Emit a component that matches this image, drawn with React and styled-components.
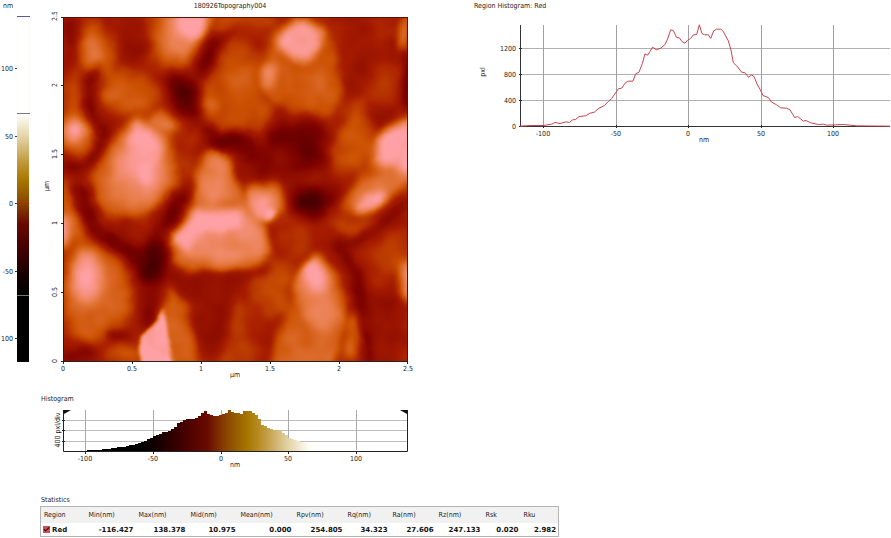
import React, { useState } from "react";
import styled, { createGlobalStyle } from "styled-components";
import { Check } from "lucide-react";

const GlobalStyle = createGlobalStyle`
  body {
    margin: 0;
    background: #ffffff;
    color: #222222;
    font-family: "DejaVu Sans Condensed", "DejaVu Sans", sans-serif;
    font-size: 7px;
    line-height: 12px;
  }
`;

const Page = styled.main`
  display: grid;
  grid-template-columns: minmax(0, 416fr) minmax(0, 425fr);
  column-gap: 50px;
`;

const ScanPanel = styled.section`
  display: grid;
  grid-template-columns: minmax(0, 38fr) minmax(0, 378fr);
`;

const HistogramPanel = styled.section`
  grid-column: 2;
  margin-top: 13px;
`;

const RegionPanel = styled.section`
  min-width: 0;
`;

const StatisticsPanel = styled.section`
  grid-column: 1 / -1;
  margin: 24px 0 0 40px;
`;

const Heading = styled.h2`
  margin: 0;
  padding-left: ${(props) => props.$indent || 0}px;
  font-size: 7px;
  font-weight: 400;
  line-height: 12px;
  text-align: ${(props) => props.$align || "left"};
`;

const Plot = styled.svg`
  display: block;
  width: 100%;
  height: auto;
  overflow: hidden;
`;

const Label = styled.text`
  font-size: 7px;
  fill: #222222;
  text-anchor: ${(props) => props.$anchor || "middle"};
`;

const Table = styled.table`
  width: 61%;
  table-layout: fixed;
  border-collapse: collapse;
  border: 1px solid #b4b4b4;
`;

const HeadCell = styled.th`
  height: 16px;
  padding: 0 3px;
  background: #f1f1f1;
  font-weight: 400;
  text-align: left;
  white-space: nowrap;
`;

const Cell = styled.td`
  height: 13px;
  padding: 0 2px;
  font-weight: 700;
  font-family: "DejaVu Sans", sans-serif;
  color: #111111;
  text-align: right;
  white-space: nowrap;

  &:first-child {
    text-align: left;
  }
`;

const RegionLabel = styled.label`
  display: flex;
  align-items: center;
  gap: 2px;
`;

const TickBox = styled.span`
  position: relative;
  display: flex;
  width: 7px;
  height: 7px;

  svg {
    position: absolute;
    inset: 0;
    pointer-events: none;
  }
`;

const Checkbox = styled.input`
  appearance: none;
  width: 7px;
  height: 7px;
  margin: 0;
  border: 1px solid #b85860;
  background: #dc4c58;
`;

// x runs along the plot, y is the height above the base line (3 units per pixel)
const counts = [
  [0, 1], [30, 3], [70, 3], [95, 7], [105, 12], [120, 9], [138, 14],
  [148, 12], [158, 20], [167, 21], [177, 30], [197, 32], [210, 40],
  [223, 43], [237, 55], [252, 62], [265, 75], [275, 84], [295, 113],
  [305, 115], [317, 132], [325, 136], [339, 136], [347, 158], [357, 163],
  [367, 189], [375, 218], [383, 214], [398, 238], [409, 230], [422, 235],
  [435, 246], [443, 263], [452, 290], [460, 288], [470, 267], [478, 266],
  [486, 255], [495, 250], [503, 259], [512, 264], [520, 275], [530, 276],
  [538, 305], [546, 279], [554, 275], [565, 275], [572, 264], [581, 287],
  [590, 292], [602, 292], [608, 288], [625, 257], [633, 229], [640, 191],
  [650, 182], [665, 163], [675, 161], [686, 147], [694, 155], [702, 150],
  [712, 125], [720, 112], [729, 93], [745, 87], [755, 73], [770, 65],
  [782, 56], [800, 55], [810, 50], [824, 27], [833, 30], [850, 16],
  [858, 18], [872, 11], [895, 6], [910, 7], [920, 4], [970, 6], [1010, 2],
  [1110, 1],
];

const countAt = (x) => {
  const i = counts.findIndex((point) => point[0] >= x);
  if (i <= 0) return counts[0][1];
  const [x0, y0] = counts[i - 1];
  const [x1, y1] = counts[i];
  return y0 + ((y1 - y0) * (x - x0)) / (x1 - x0);
};

const bars = Array.from({ length: 115 }, (_, i) => ({
  x: i * 3,
  height: Math.round(countAt((i + 0.5) * 9.65) * 0.137),
}));

// Surface features: height 0-1, blur, shape
const ridge = (h, blur, d) => ({ h, blur, d });
const grain = (h, blur, cx, cy, rx, ry, rotate = 0) => ({
  h, blur, cx, cy, rx, ry, rotate,
});

const features = [
  grain(0.22, 8, 72, 40, 10, 30),
  grain(0.26, 8, 132, 38, 14, 26),
  grain(0.34, 8, 375, 70, 32, 45),
  grain(0.3, 8, 215, 318, 26, 44),
  grain(0.3, 8, 200, 290, 30, 14),
  grain(0.14, 8, 300, 145, 34, 28),
  grain(0.24, 8, 265, 165, 34, 18),
  grain(0.08, 7, 225, 142, 34, 12, 10),
  grain(0.32, 8, 385, 325, 24, 36),
  grain(0.54, 7, 78, 92, 14, 24),
  grain(0.62, 6, 98, 54, 17, 33, -12),
  grain(0.82, 6, 94, 52, 8, 18, -10),
  grain(0.58, 7, 133, 93, 32, 22, 12),
  grain(0.66, 5, 112, 92, 9, 8),
  ridge(0.6, 6, "M145 10 L226 10 L206 36 L198 62 L182 74 L164 64 L150 40Z"),
  ridge(0.82, 6, "M161 14 L210 14 L196 40 L182 66 L166 50Z"),
  ridge(1.3, 4, "M172 8 L218 8 L203 32 L190 42 L178 35Z"),
  ridge(0.52, 5, "M215 8 L275 8 L264 28 L232 26 L212 36Z"),
  grain(0.62, 7, 79, 134, 20, 29, -20),
  grain(1.15, 6, 73, 132, 10, 12),
  ridge(0.56, 5, "M222 42 L248 38 L260 60 L262 90 L272 112 L260 129 L226 130 L202 120 L197 98 L207 74Z"),
  grain(0.78, 5, 211, 106, 9, 8),
  grain(0.64, 6, 240, 82, 14, 16),
  ridge(0.6, 4, "M273 30 L298 18 L326 28 L337 55 L342 88 L331 115 L300 113 L272 105 L258 86 L265 56Z"),
  ridge(1.25, 5, "M274 44 L287 28 L306 20 L323 34 L320 50 L304 64 L288 54Z"),
  grain(0.84, 5, 269, 77, 7, 10, 15),
  grain(0.66, 6, 305, 86, 20, 14),
  grain(0.58, 7, 354, 138, 22, 36, 12),
  grain(0.46, 7, 384, 84, 18, 24),
  grain(0.06, 5, 409, 80, 5, 44),
  grain(0.8, 5, 405, 34, 5, 18),
  ridge(0.7, 5, "M414 110 L388 120 L372 142 L372 170 L392 182 L414 180Z"),
  ridge(1.3, 4, "M414 115 L396 122 L378 140 L379 164 L394 172 L414 172Z"),
  ridge(0.66, 5, "M136 116 L160 126 L176 150 L175 186 L158 210 L136 221 L110 215 L91 200 L95 168 L112 136Z"),
  ridge(0.86, 7, "M134 122 L160 136 L170 160 L160 196 L130 208 L108 194 L114 154Z"),
  ridge(1.3, 5, "M136 116 L148 134 L163 150 L160 168 L144 184 L130 174 L128 140Z"),
  grain(0.78, 5, 163, 123, 14, 10),
  grain(0.46, 7, 190, 148, 12, 20, 25),
  grain(0, 8, 184, 96, 13, 28, -22),
  grain(0.12, 7, 207, 58, 8, 24, 24),
  ridge(0.7, 4, "M205 152 L218 152 L231 164 L240 188 L248 212 L266 226 L271 248 L260 268 L232 273 L190 271 L171 262 L169 244 L178 220 L192 198 L198 172Z"),
  grain(0.84, 6, 215, 182, 13, 28),
  ridge(0.86, 5, "M188 210 L242 210 L266 230 L268 254 L232 264 L190 256 L174 240Z"),
  ridge(1.2, 4, "M192 209 L236 212 L245 224 L226 231 L202 235 L186 247 L175 238Z"),
  grain(0.76, 5, 264, 203, 20, 20),
  grain(0.92, 5, 261, 204, 12, 12),
  grain(1.3, 3, 271, 214, 6, 6),
  grain(0.78, 6, 374, 190, 32, 16, -30),
  grain(1.15, 4, 371, 201, 17, 6, -28),
  grain(0.58, 6, 356, 228, 22, 9, -10),
  grain(-0.1, 7, 314, 201, 22, 17),
  grain(0.44, 7, 290, 238, 17, 15),
  grain(0.54, 8, 394, 254, 22, 16, -15),
  grain(0.72, 6, 74, 212, 10, 32, -12),
  grain(1.1, 5, 63, 232, 8, 18),
  ridge(0.66, 7, "M68 240 L97 242 L120 260 L132 285 L130 315 L108 332 L84 340 L64 310Z"),
  grain(1.25, 7, 87, 277, 14, 26, -12),
  grain(0.62, 7, 97, 330, 16, 10),
  grain(0, 7, 153, 260, 15, 28, 8),
  grain(0.12, 6, 172, 212, 7, 32, 28),
  grain(0.2, 7, 150, 304, 12, 22),
  grain(0.2, 5, 116, 334, 10, 6),
  grain(0.16, 7, 76, 356, 22, 7),
  grain(0.58, 6, 125, 356, 16, 10),
  ridge(0.64, 5, "M170 286 L188 304 L194 340 L200 368 L160 368 L160 316Z"),
  ridge(1.3, 2, "M164 306 L168 334 L175 368 L141 368 L140 338 L154 324Z"),
  ridge(0.48, 5, "M238 290 L258 368 L220 368Z"),
  ridge(0.56, 6, "M274 256 L290 270 L294 310 L272 316 L248 304 L252 282Z"),
  ridge(0.67, 4, "M318 253 L330 264 L344 294 L346 322 L336 362 L306 366 L292 322 L296 274Z"),
  ridge(0.84, 6, "M314 258 L328 276 L340 316 L334 334 L304 318 L300 280Z"),
  ridge(1.25, 5, "M316 256 L325 276 L323 294 L310 290 L307 266Z"),
  ridge(0.66, 4, "M293 304 L306 330 L314 368 L270 368 L280 328Z"),
  grain(0.66, 4, 354, 334, 9, 24, 10),
  grain(0.95, 5, 408, 282, 6, 22),
];

const valleys = [
  { d: "M93 74 C85 92 90 118 104 136", h: 0.1, width: 11 },
  { d: "M104 138 C96 160 90 168 66 168", h: 0.14, width: 8 },
  { d: "M76 186 C84 206 90 230 106 236 S128 250 142 262", h: 0.08, width: 13 },
  { d: "M340 242 C352 270 366 300 368 362", h: 0.15, width: 11 },
  { d: "M412 200 C390 214 380 236 346 244", h: 0.12, width: 8 },
  { d: "M172 274 C200 284 240 282 268 270", h: 0.24, width: 7 },
  { d: "M340 118 C336 126 330 132 326 150", h: 0.22, width: 7 },
  { d: "M366 112 C384 126 396 122 410 112", h: 0.14, width: 5 },
];

const gray = (h) => {
  const v = Math.round(Math.max(0, Math.min(1, h)) * 255);
  return `rgb(${v}, ${v}, ${v})`;
};

const paletteStops = [
  [0, "#fffffa"],
  [0.12, "#e4d6ac"],
  [0.28, "#bd9230"],
  [0.36, "#a87800"],
  [0.48, "#8c4a00"],
  [0.6, "#6a0a00"],
  [0.74, "#440000"],
  [0.9, "#120000"],
  [1, "#000000"],
];

const ColorScale = () => (
  <Plot viewBox="0 12 38 368" role="img" aria-label="Height scale">
    <defs>
      <linearGradient id="scale" x1="0" y1="0" x2="0" y2="1">
        {paletteStops.map(([offset, color]) => (
          <stop key={offset} offset={offset} stopColor={color} />
        ))}
      </linearGradient>
    </defs>
    <rect x="17" y="17" width="12" height="96" fill="#fffffc" stroke="#f6f6f2" strokeWidth="0.5" />
    <rect x="17" y="114" width="12" height="182" fill="url(#scale)" />
    <rect x="17" y="295" width="12" height="67" fill="#000000" />
    <rect x="17" y="16" width="13" height="1" fill="#5558b0" />
    <rect x="17" y="113" width="13" height="1" fill="#77777f" />
    <rect x="17" y="203" width="12" height="1" fill="#b03000" />
    <rect x="17" y="295" width="12" height="1" fill="#777777" />
    {[["100", 69], ["50", 137], ["0", 204], ["-50", 272], ["100", 339]].map(
      ([text, y]) => (
        <g key={y}>
          <rect x="15" y={y - 1} width="2" height="1" fill="#333333" />
          <Label x="13" y={y + 2} $anchor="end">{text}</Label>
        </g>
      )
    )}
  </Plot>
);

const Surface = () => (
  <svg x="0" y="0" width="345" height="345" viewBox="63 17 345 345">
    <defs>
      {[2, 3, 4, 5, 6, 7, 8].map((size) => (
        <filter key={size} id={`soft${size}`} x="-150%" y="-150%" width="400%" height="400%">
          <feGaussianBlur stdDeviation={size * 0.9} />
        </filter>
      ))}
      <filter
        id="relief"
        filterUnits="userSpaceOnUse"
        x="43"
        y="-3"
        width="385"
        height="385"
        colorInterpolationFilters="sRGB"
      >
        <feTurbulence type="fractalNoise" baseFrequency="0.035" numOctaves="2" seed="7" result="noise" />
        <feDisplacementMap in="SourceGraphic" in2="noise" scale="9" xChannelSelector="R" yChannelSelector="G" result="rough" />
        <feColorMatrix in="noise" type="matrix" values="0 0 1 0 0  0 0 1 0 0  0 0 1 0 0  0 0 0 0 1" result="grain" />
        <feComposite in="rough" in2="grain" operator="arithmetic" k1="0" k2="1" k3="0.2" k4="-0.09" />
        <feGaussianBlur stdDeviation="1" />
        <feComponentTransfer>
          <feFuncR type="table" tableValues="0.29 0.5 0.65 0.8 0.91 1" />
          <feFuncG type="table" tableValues="0 0.01 0.11 0.32 0.49 0.63" />
          <feFuncB type="table" tableValues="0 0 0 0.01 0.28 0.65" />
          <feFuncA type="linear" slope="0" intercept="1" />
        </feComponentTransfer>
      </filter>
    </defs>
    <g filter="url(#relief)">
      <rect x="33" y="-13" width="405" height="405" fill={gray(0.4)} />
      {features.map((f, i) =>
        f.d ? (
          <path key={i} d={f.d} fill={gray(f.h)} filter={`url(#soft${f.blur})`} />
        ) : (
          <ellipse
            key={i}
            cx={f.cx}
            cy={f.cy}
            rx={f.rx}
            ry={f.ry}
            transform={`rotate(${f.rotate} ${f.cx} ${f.cy})`}
            fill={gray(f.h)}
            filter={`url(#soft${f.blur})`}
          />
        )
      )}
      {valleys.map((v) => (
        <path
          key={v.d}
          d={v.d}
          fill="none"
          stroke={gray(v.h)}
          strokeWidth={v.width}
          strokeLinecap="round"
          filter="url(#soft6)"
        />
      ))}
    </g>
  </svg>
);

const mapTicks = ["0", "0.5", "1", "1.5", "2", "2.5"];

const TopographyMap = () => (
  <Plot viewBox="-25 -5 378 368" role="img" aria-label="Topography">
    <Surface />
    <path d="M0.5 0V344.5H345" fill="none" stroke="#222222" />
    <path d="M0 0.5H344.5V345" fill="none" stroke="#5a1000" />
    {mapTicks.map((text, i) => (
      <g key={text}>
        <rect x={i * 69 - (i === 5 ? 1 : 0)} y="345" width="1" height="2" fill="#222222" />
        <rect x="-2" y={344 - i * 69 + (i === 5 ? 1 : 0)} width="2" height="1" fill="#222222" />
        <Label x={i * 69} y="354">{text}</Label>
        <Label transform={`translate(-6 ${344 - i * 69}) rotate(-90)`}>{text}</Label>
      </g>
    ))}
    <Label x="172" y="360">µm</Label>
    <Label transform="translate(-14 169) rotate(-90)">µm</Label>
  </Plot>
);

const PaletteHistogram = () => (
  <Plot viewBox="-25 -5 378 65" role="img" aria-label="Histogram">
    <defs>
      <linearGradient id="bars" gradientUnits="userSpaceOnUse" x1="247" y1="0" x2="76" y2="0">
        {paletteStops.map(([offset, color]) => (
          <stop key={offset} offset={offset} stopColor={color} />
        ))}
      </linearGradient>
    </defs>
    {[10, 20, 31].map((y) => (
      <g key={y}>
        <rect x="0" y={y} width="345" height="1" fill="#bcbcbc" />
        <rect x="-1" y={y} width="3" height="1" fill="#222222" />
      </g>
    ))}
    {[22, 90, 158, 225, 293].map((x) => (
      <rect key={x} x={x} y="0" width="1" height="41" fill="#aaaaaa" />
    ))}
    <path
      d={`M0 41${bars.map((bar) => `V${41 - bar.height}H${bar.x + 3}`).join("")}V41Z`}
      fill="url(#bars)"
      shapeRendering="crispEdges"
    />
    <path d="M0.5 0V41.5H344.5V0" fill="none" stroke="#222222" />
    <path d="M0 0H8L1 4ZM345 0H337L344 4Z" fill="#111111" />
    {[["-100", 22], ["-50", 90], ["0", 158], ["50", 225], ["100", 293]].map(
      ([text, x]) => (
        <g key={text}>
          <rect x={x} y="41" width="1" height="3" fill="#222222" />
          <Label x={x} y="51">{text}</Label>
        </g>
      )
    )}
    <Label x="172" y="57">nm</Label>
    <Label transform="translate(-3 20) rotate(-90)">400 pxl/div</Label>
  </Plot>
);

const RegionHistogram = () => (
  <Plot viewBox="-54 -13 425 133" role="img" aria-label="Region histogram">
    {[["1200", 23], ["800", 49], ["400", 75], ["0", 101]].map(([text, y]) => (
      <g key={text}>
        <rect x="0" y={y} width="370" height="1" fill="#b0b0b0" />
        <rect x="-1" y={y} width="3" height="1" fill="#222222" />
        <Label x="-4" y={y + 3} $anchor="end">{text}</Label>
      </g>
    ))}
    {[["-100", 23], ["-50", 96], ["0", 168], ["50", 241], ["100", 313]].map(
      ([text, x]) => (
        <g key={text}>
          <rect x={x} y="0" width="1" height="101" fill="#a0a0a0" />
          <rect x={x} y="100" width="1" height="3" fill="#222222" />
          <Label x={x} y="111">{text}</Label>
        </g>
      )
    )}
    <path d="M0.5 0V101.5H370" fill="none" stroke="#333333" />
    <polyline
      points={counts.map(([x, y]) => `${x / 3},${101.5 - y / 3}`).join(" ")}
      fill="none"
      stroke="#c84550"
      strokeWidth="1"
      strokeLinejoin="round"
    />
    <Label x="184" y="117">nm</Label>
    <Label transform="translate(-35 47) rotate(-90)">pxl</Label>
  </Plot>
);

const columns = [
  { name: "Region", width: 45 },
  { name: "Min(nm)", width: 50, value: "-116.427" },
  { name: "Max(nm)", width: 52, value: "138.378" },
  { name: "Mid(nm)", width: 50, value: "10.975" },
  { name: "Mean(nm)", width: 56, value: "0.000" },
  { name: "Rpv(nm)", width: 51, value: "254.805" },
  { name: "Rq(nm)", width: 45, value: "34.323" },
  { name: "Ra(nm)", width: 46, value: "27.606" },
  { name: "Rz(nm)", width: 47, value: "247.133" },
  { name: "Rsk", width: 38, value: "0.020" },
  { name: "Rku", width: 38, value: "2.982" },
];

const Column = styled.col`
  width: ${(props) => (props.$share / 518) * 100}%;
`;

const StatisticsTable = () => {
  const [checked, setChecked] = useState(true);

  return (
    <Table>
      <colgroup>
        {columns.map((column) => (
          <Column key={column.name} $share={column.width} />
        ))}
      </colgroup>
      <thead>
        <tr>
          {columns.map((column) => (
            <HeadCell key={column.name}>{column.name}</HeadCell>
          ))}
        </tr>
      </thead>
      <tbody>
        <tr>
          <Cell>
            <RegionLabel>
              <TickBox>
                <Checkbox
                  type="checkbox"
                  checked={checked}
                  onChange={(e) => setChecked(e.target.checked)}
                />
                {checked && <Check size={7} strokeWidth={4} color="#3a1010" />}
              </TickBox>
              Red
            </RegionLabel>
          </Cell>
          {columns.slice(1).map((column) => (
            <Cell key={column.name}>{column.value}</Cell>
          ))}
        </tr>
      </tbody>
    </Table>
  );
};

const App = () => (
  <>
    <GlobalStyle />
    <Page>
      <ScanPanel>
        <Heading $indent={3}>nm</Heading>
        <Heading $indent={6} $align="center">180926Topography004</Heading>
        <ColorScale />
        <TopographyMap />
        <HistogramPanel>
          <Heading $indent={3}>Histogram</Heading>
          <PaletteHistogram />
        </HistogramPanel>
      </ScanPanel>
      <RegionPanel>
        <Heading $indent={8}>Region Histogram: Red</Heading>
        <RegionHistogram />
      </RegionPanel>
      <StatisticsPanel>
        <Heading $indent={1}>Statistics</Heading>
        <StatisticsTable />
      </StatisticsPanel>
    </Page>
  </>
);

export default App;
